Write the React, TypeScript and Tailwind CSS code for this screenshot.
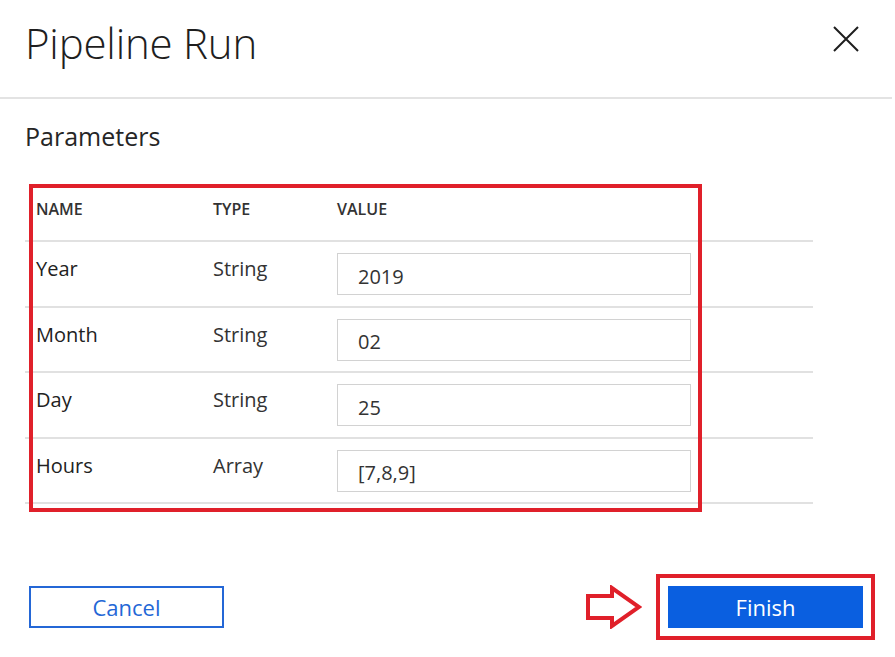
interface Param {
  name: string
  type: string
  value: string
}

const params: Param[] = [
  { name: 'Year', type: 'String', value: '2019' },
  { name: 'Month', type: 'String', value: '02' },
  { name: 'Day', type: 'String', value: '25' },
  { name: 'Hours', type: 'Array', value: '[7,8,9]' },
]

function Arrow() {
  return (
    <svg width="56" height="44" viewBox="0 0 56 44" className="block">
      <path
        d="M2 11 H26 V3 L53 22 L26 41 V33 H2 Z"
        fill="none"
        stroke="#e0202a"
        strokeWidth="4"
        strokeLinejoin="miter"
      />
    </svg>
  )
}

function CloseIcon() {
  return (
    <svg width="26" height="26" viewBox="0 0 26 26" className="block">
      <path d="M1 1 L25 25 M25 1 L1 25" stroke="#1e1e1e" strokeWidth="2" fill="none" />
    </svg>
  )
}

export default function App() {
  return (
    <div className="relative w-[895px] h-[657px] bg-white text-[#222] font-['Open_Sans',sans-serif] overflow-hidden">
      {/* Header */}
      <div className="h-[99px] flex items-start justify-between border-b-2 border-[#e3e3e3] pl-[25px] pr-[33px] mr-[3px]">
        <h1 className="mt-[14px] text-[42px] leading-[58px] font-light tracking-[-0.2px] text-[#1e1e1e]">Pipeline Run</h1>
        <button className="mt-[26px]">
          <CloseIcon />
        </button>
      </div>

      {/* Parameters */}
      <div className="pl-[25px] pt-[20px]">
        <h2 className="text-[25px] leading-[34px] font-normal text-[#262626]">Parameters</h2>
      </div>

      {/* Table */}
      <div className="ml-[25px] w-[788px] mt-[33px]">
        <div className="grid grid-cols-[177px_124px_1fr] h-[56px] border-b-2 border-[#e1e1e1] pl-[11px] items-center pb-[8px] text-[16px] font-semibold text-[#333]">
          <span>NAME</span>
          <span>TYPE</span>
          <span>VALUE</span>
        </div>
        {params.map((p) => (
          <div
            key={p.name}
            className="grid grid-cols-[177px_124px_354px] h-[65.5px] border-b-2 border-[#e1e1e1] pl-[11px] items-start"
          >
            <span className="pt-[14px] text-[20px] leading-[26px] text-[#222]">{p.name}</span>
            <span className="pt-[14px] text-[20px] leading-[26px] text-[#333]">{p.type}</span>
            <div className="mt-[11px] h-[42px] border-[1.5px] border-[#d2d2d2] pl-[20px] flex items-center pt-[5px] text-[20px] text-[#333]">
              {p.value}
            </div>
          </div>
        ))}
      </div>

      {/* Footer */}
      <div className="flex items-center justify-between mt-[70px] pl-[29px] pr-[20px]">
        <button className="w-[195px] h-[42px] border-2 border-[#2467d6] text-[#2467d6] text-[22px] leading-none">
          Cancel
        </button>
        <div className="flex items-center gap-[14px]">
          <Arrow />
          <div className="border-4 border-[#e0202a] p-[8px]">
            <button className="w-[195px] h-[42px] bg-[#0a5fe0] text-white text-[22px] leading-none">
              Finish
            </button>
          </div>
        </div>
      </div>

      {/* Annotation box around the table */}
      <div className="absolute left-[29px] top-[184px] w-[673px] h-[328px] border-4 border-[#e0202a] pointer-events-none" />
    </div>
  )
}
